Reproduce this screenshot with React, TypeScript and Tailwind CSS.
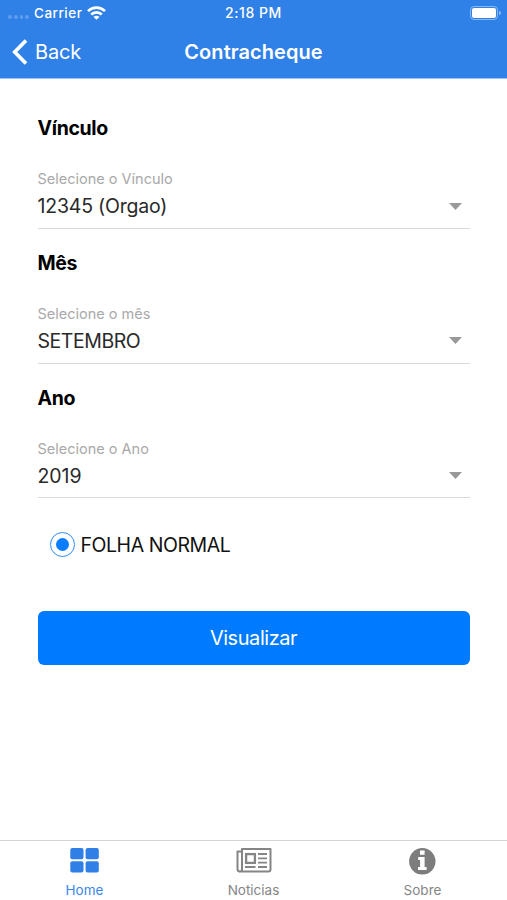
import React from "react";

type FieldProps = {
  title: string;
  label: string;
  value: string;
  valueClass: string;
};

function Field({ title, label, value, valueClass }: FieldProps) {
  return (
    <section className="flex h-[134.75px] shrink-0 flex-col border-b border-[#d9d9d9]">
      <h2 className="mt-[22px] h-6 text-[19.5px] leading-6 font-bold tracking-[-0.35px] text-black">{title}</h2>
      <span className="mt-[29px] h-5 text-[14.5px] leading-5 text-[#a9a9a9]">{label}</span>
      <button className="mt-[5px] flex h-6 items-center justify-between pr-[8px]">
        <span className={`text-[19.5px] leading-6 text-[#292929] ${valueClass}`}>{value}</span>
        <svg className="h-[7px] w-[13px]" viewBox="0 0 13 7">
          <path d="M0 0H13L6.5 7Z" fill="#999" />
        </svg>
      </button>
    </section>
  );
}

function WifiIcon() {
  return (
    <svg className="ml-[5px] h-[14px] w-[19px]" viewBox="0 0 19 14" fill="none" stroke="#fff" strokeWidth="2.7">
      <path d="M1 5.1a12.2 12.2 0 0 1 17 0" />
      <path d="M4.2 8.5a7.6 7.6 0 0 1 10.6 0" />
      <path d="M9.5 13.8 6.5 10.9a4.2 4.2 0 0 1 6 0Z" fill="#fff" stroke="none" />
    </svg>
  );
}

function NewsIcon() {
  return (
    <svg className="h-[25px] w-[36px]" viewBox="0 0 36 25" fill="none" stroke="#858585" strokeWidth="2">
      <path d="M6 1H34.5V21.5Q34.5 23.5 32.5 23.5H4Q6 23.5 6 21Z" strokeLinejoin="round" />
      <path d="M6 3.5H1.5V21Q1.5 23.5 4 23.5" strokeLinejoin="round" />
      <rect x="10.1" y="6.1" width="8.8" height="8.8" strokeWidth="2.3" />
      <path d="M22 6H31M22 10.3H31M22 14.7H31M9 19H19.5M22 19H31" strokeWidth="1.8" />
    </svg>
  );
}

function HomeIcon() {
  return (
    <svg className="h-[25px] w-[29px]" viewBox="0 0 29 25" fill="#2f7fe6">
      <rect x="0.3" width="13.2" height="11.3" rx="2" />
      <rect x="15.6" width="13.2" height="11.3" rx="2" />
      <rect x="0.3" y="13.2" width="13.2" height="11.3" rx="2" />
      <rect x="15.6" y="13.2" width="13.2" height="11.3" rx="2" />
    </svg>
  );
}

function InfoIcon() {
  return (
    <svg className="size-[27px]" viewBox="0 0 27 27">
      <circle cx="13.3" cy="13.3" r="13.2" fill="#7d7d7d" />
      <path d="M11 2.6H15.6V6.8H11ZM9.2 9H15.6V18.9H17.6V22H9V18.9H11.1V12H9.2Z" fill="#fff" />
    </svg>
  );
}

export default function App() {
  return (
    <div className="flex h-[900px] w-[507px] flex-col overflow-hidden bg-white font-['Inter','Liberation_Sans',sans-serif]">
      <header className="h-[79px] shrink-0 border-b border-[#9cc3f5] bg-[#2f80e7] text-white">
        <div className="grid h-[26px] grid-cols-3 items-center text-[13.5px] leading-[26px] font-medium">
          <div className="flex items-center pl-[8px]">
            <span className="mt-[8px] mr-[5px] flex gap-[2px]">
              {[0, 1, 2, 3].map((dot) => (
                <i key={dot} className="size-[3.75px] rounded-full bg-[#5f9dec]" />
              ))}
            </span>
            <span className="tracking-[0.5px]">Carrier</span>
            <WifiIcon />
          </div>
          <span className="text-center text-[14px] tracking-[0.55px]">2:18 PM</span>
          <div className="flex items-center justify-end pr-[6px]">
            <span className="flex h-[14px] w-[28px] rounded-[4px] border border-[#8bb8f1] p-[1px]">
              <i className="h-full w-full rounded-[2px] bg-white" />
            </span>
            <i className="ml-px h-[4px] w-[2px] rounded-r-full bg-[#8bb8f1]" />
          </div>
        </div>
        <div className="grid h-[52px] grid-cols-[1fr_auto_1fr] items-center">
          <button className="flex items-center pl-[12px]">
            <svg className="h-[26px] w-[16px]" viewBox="0 0 16 26" fill="none" stroke="#fff" strokeWidth="3.7">
              <path d="M14 1.5 2.7 13 14 24.5" />
            </svg>
            <span className="ml-[7px] text-[20px] leading-6 tracking-[-0.2px]">Back</span>
          </button>
          <h1 className="text-[20px] leading-6 font-semibold tracking-[0.05px]">Contracheque</h1>
        </div>
      </header>

      <main className="flex flex-1 flex-col px-[37.5px] pt-[15px]">
        <Field title="Vínculo" label="Selecione o Vínculo" value="12345 (Orgao)" valueClass="tracking-[-0.2px]" />
        <Field title="Mês" label="Selecione o mês" value="SETEMBRO" valueClass="tracking-[-0.45px]" />
        <Field title="Ano" label="Selecione o Ano" value="2019" valueClass="tracking-[-0.05px]" />
        <label className="mt-[34px] ml-[12px] flex h-[25px] shrink-0 items-center">
          <span className="flex size-[25px] items-center justify-center rounded-full border-[1.5px] border-[#2f8cfa]">
            <i className="size-[13px] rounded-full bg-[#087dff]" />
          </span>
          <span className="ml-[6px] text-[19.5px] leading-6 tracking-[-0.45px] text-[#111]">FOLHA NORMAL</span>
        </label>
        <button className="mt-[53.5px] h-[54.5px] shrink-0 rounded-[6px] bg-[#007aff] text-[20px] tracking-[-0.45px] text-white">Visualizar</button>
      </main>

      <nav className="grid h-[60px] shrink-0 grid-cols-3 border-t border-[#d5d5d5] text-[13.5px] text-[#858585]">
        <div className="flex flex-col items-center pt-[7px] text-[#3a86e8]">
          <HomeIcon />
          <span className="mt-[7px] leading-5">Home</span>
        </div>
        <div className="flex flex-col items-center pt-[7px]">
          <NewsIcon />
          <span className="mt-[7px] leading-5">Noticias</span>
        </div>
        <div className="flex flex-col items-center pt-[7px]">
          <InfoIcon />
          <span className="mt-[5px] leading-5">Sobre</span>
        </div>
      </nav>
    </div>
  );
}
